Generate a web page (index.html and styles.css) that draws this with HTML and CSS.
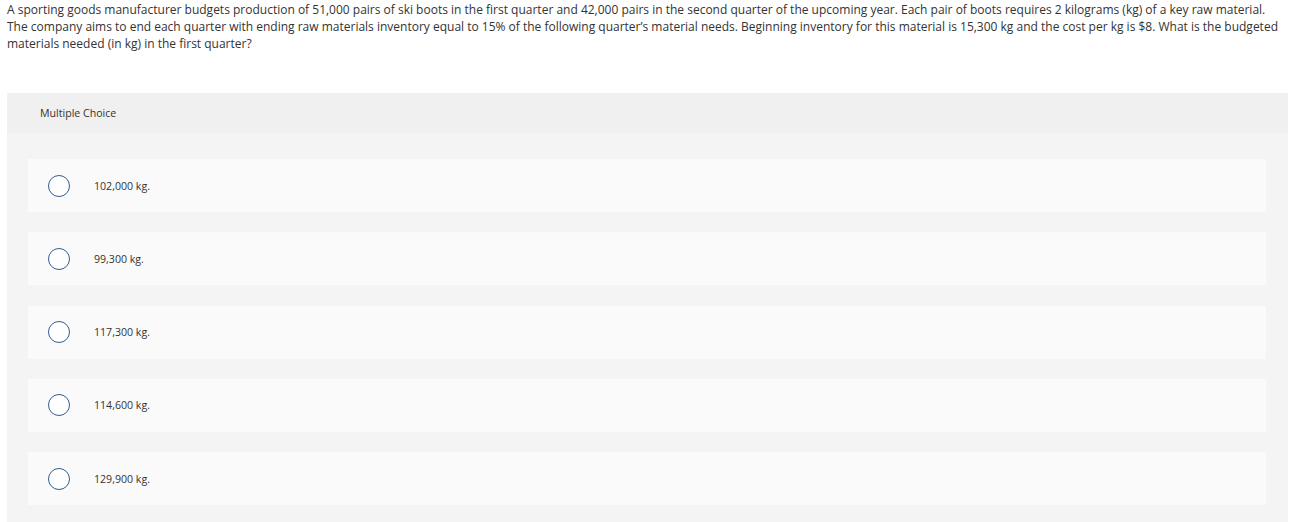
FILE: index.html
```html
<!DOCTYPE html>
<html>
<head>
<meta charset="utf-8">
<link rel="stylesheet" href="styles.css">
</head>
<body>
<div class="page">
  <p class="question">A sporting goods manufacturer budgets production of 51,000 pairs of ski boots in the first quarter and 42,000 pairs in the second quarter of the upcoming year. Each pair of boots requires 2 kilograms (kg) of a key raw material. The company aims to end each quarter with ending raw materials inventory equal to 15% of the following quarter’s material needs. Beginning inventory for this material is 15,300 kg and the cost per kg is $8. What is the budgeted materials needed (in kg) in the first quarter?</p>
  <div class="panel">
    <div class="panel-head">Multiple Choice</div>
    <div class="panel-body">
      <div class="option"><span class="radio"></span><span class="label">102,000 kg.</span></div>
      <div class="option"><span class="radio"></span><span class="label">99,300 kg.</span></div>
      <div class="option"><span class="radio"></span><span class="label">117,300 kg.</span></div>
      <div class="option"><span class="radio"></span><span class="label">114,600 kg.</span></div>
      <div class="option"><span class="radio"></span><span class="label">129,900 kg.</span></div>
    </div>
  </div>
</div>
</body>
</html>
```
FILE: styles.css
```css
html, body {
  margin: 0;
  padding: 0;
  background: #ffffff;
}
body {
  font-family: "Open Sans", "Lato", sans-serif;
  color: #333333;
  font-variant-ligatures: none;
}
.page {
  padding: 1px 2px 0 7px;
}
.question {
  margin: 0;
  font-size: 12px;
  line-height: 17px;
  color: #333;
  max-width: 1275px;
}
.panel {
  margin-top: 41px;
  background: #f4f4f4;
}
.panel-head {
  background: #f0f0f0;
  height: 40px;
  display: flex;
  align-items: center;
  padding-left: 33px;
  font-size: 10.6px;
  color: #333;
}
.panel-body {
  padding: 26px 22px 17px 21px;
  display: flex;
  flex-direction: column;
  gap: 20.3px;
}
.option {
  background: #fafafa;
  height: 53px;
  display: flex;
  align-items: center;
  padding-left: 20px;
}
.radio {
  width: 20px;
  height: 20px;
  border: 1.5px solid #2e5f8f;
  border-radius: 50%;
  background: #fff;
  flex: none;
}
.label {
  margin-left: 24px;
  font-size: 10.6px;
  color: #333;
}
```
